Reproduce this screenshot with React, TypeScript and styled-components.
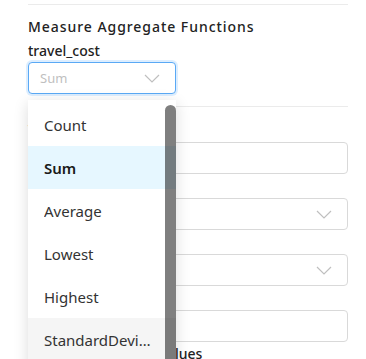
import * as React from "react";
import styled, { createGlobalStyle } from "styled-components";

const GlobalStyle = createGlobalStyle`
  html, body {
    margin: 0;
    padding: 0;
    background: #ffffff;
  }
  body {
    font-family: "Noto Sans", "Liberation Sans", sans-serif;
    color: #262626;
    overflow: hidden;
  }
`;

const aggregateOptions: string[] = ["Count", "Sum", "Average", "Lowest", "Highest", "StandardDeviation", "Variance"];

const Page = styled.div`
  width: 366px;
  height: 359px;
  box-sizing: border-box;
  padding: 4px 18px 0 28px;
  overflow: hidden;
`;

const Divider = styled.div`
  border-top: 1px solid #ebebeb;
`;

const SectionTitle = styled.div`
  margin-top: 12px;
  font-size: 14px;
  font-weight: 500;
  line-height: 20px;
  letter-spacing: 0.95px;
  color: #222;
`;

const FieldName = styled.div`
  margin-top: 4px;
  font-size: 14px;
  font-weight: 500;
  line-height: 20px;
  color: #222;
`;

const SelectHolder = styled.div`
  position: relative;
  margin-top: 1px;
  width: 148px;
`;

const SelectBox = styled.div<{ $focused?: boolean }>`
  width: 100%;
  height: 32px;
  box-sizing: border-box;
  display: flex;
  align-items: center;
  justify-content: space-between;
  padding: 0 15px 0 11px;
  border: 1px solid ${p => (p.$focused ? "#5aa9f5" : "#d9d9d9")};
  border-radius: 4px;
  box-shadow: ${p => (p.$focused ? "0 0 0 2px rgba(24, 144, 255, 0.15)" : "none")};
  background: #fff;
`;

const Placeholder = styled.span`
  font-size: 13px;
  color: #bfbfbf;
`;

const Chevron = () => (
  <svg width="16" height="9" viewBox="0 0 16 9" fill="none">
    <path d="M1 1 L8 8 L15 1" stroke="#bfbfbf" strokeWidth="1.2" />
  </svg>
);

const Menu = styled.div`
  position: absolute;
  top: 38px;
  left: 0;
  width: 148px;
  height: 300px;
  padding-top: 3px;
  box-sizing: border-box;
  background: #fff;
  box-shadow: 0 3px 14px rgba(0, 0, 0, 0.14);
  overflow: hidden;
  z-index: 10;
`;

const MenuItem = styled.div<{ $selected?: boolean; $hovered?: boolean }>`
  height: 43px;
  display: flex;
  align-items: center;
  padding: 0 8px 0 16px;
  font-size: 15px;
  font-weight: ${p => (p.$selected ? 600 : 400)};
  color: ${p => (p.$selected ? "#1a1a1a" : "#333")};
  background: ${p => (p.$selected ? "#e6f7ff" : p.$hovered ? "#f5f5f5" : "transparent")};
`;

const ItemText = styled.span`
  max-width: 114px;
  white-space: nowrap;
  overflow: hidden;
  text-overflow: ellipsis;
`;

const ScrollThumb = styled.div`
  position: absolute;
  top: 5px;
  right: 0;
  bottom: 0;
  width: 11px;
  border-radius: 6px 6px 0 0;
  background: rgba(0, 0, 0, 0.5);
`;

const Form = styled.div`
  margin-top: 12px;
  border-top: 1px solid #ebebeb;
  padding-top: 11px;
`;

const Field = styled.div`
  display: flex;
  flex-direction: column;
`;

const FieldLabel = styled.div`
  height: 24px;
  line-height: 24px;
  font-size: 14px;
  font-weight: 500;
  color: #222;
  white-space: nowrap;
`;

const TextInput = styled.div`
  height: 32px;
  box-sizing: border-box;
  border: 1px solid #d9d9d9;
  border-radius: 4px;
`;

export default function App() {
  return (
    <>
      <GlobalStyle />
      <Page>
        <Divider />
        <SectionTitle>Measure Aggregate Functions</SectionTitle>
        <FieldName>travel_cost</FieldName>
        <SelectHolder>
          <SelectBox $focused>
            <Placeholder>Sum</Placeholder>
            <Chevron />
          </SelectBox>
          <Menu>
            {aggregateOptions.map(option => (
              <MenuItem key={option} $selected={option === "Sum"} $hovered={option === "StandardDeviation"}>
                <ItemText>{option}</ItemText>
              </MenuItem>
            ))}
            <ScrollThumb />
          </Menu>
        </SelectHolder>
        <Form>
          <Field>
            <FieldLabel>Title</FieldLabel>
            <TextInput />
          </Field>
          <Field>
            <FieldLabel>Sort</FieldLabel>
            <SelectBox>
              <span />
              <Chevron />
            </SelectBox>
          </Field>
          <Field>
            <FieldLabel>Format</FieldLabel>
            <SelectBox>
              <span />
              <Chevron />
            </SelectBox>
          </Field>
          <Field>
            <FieldLabel>Prefix</FieldLabel>
            <TextInput />
          </Field>
          <Field>
            <FieldLabel>Emphasize Missing Values</FieldLabel>
          </Field>
        </Form>
      </Page>
    </>
  );
}
